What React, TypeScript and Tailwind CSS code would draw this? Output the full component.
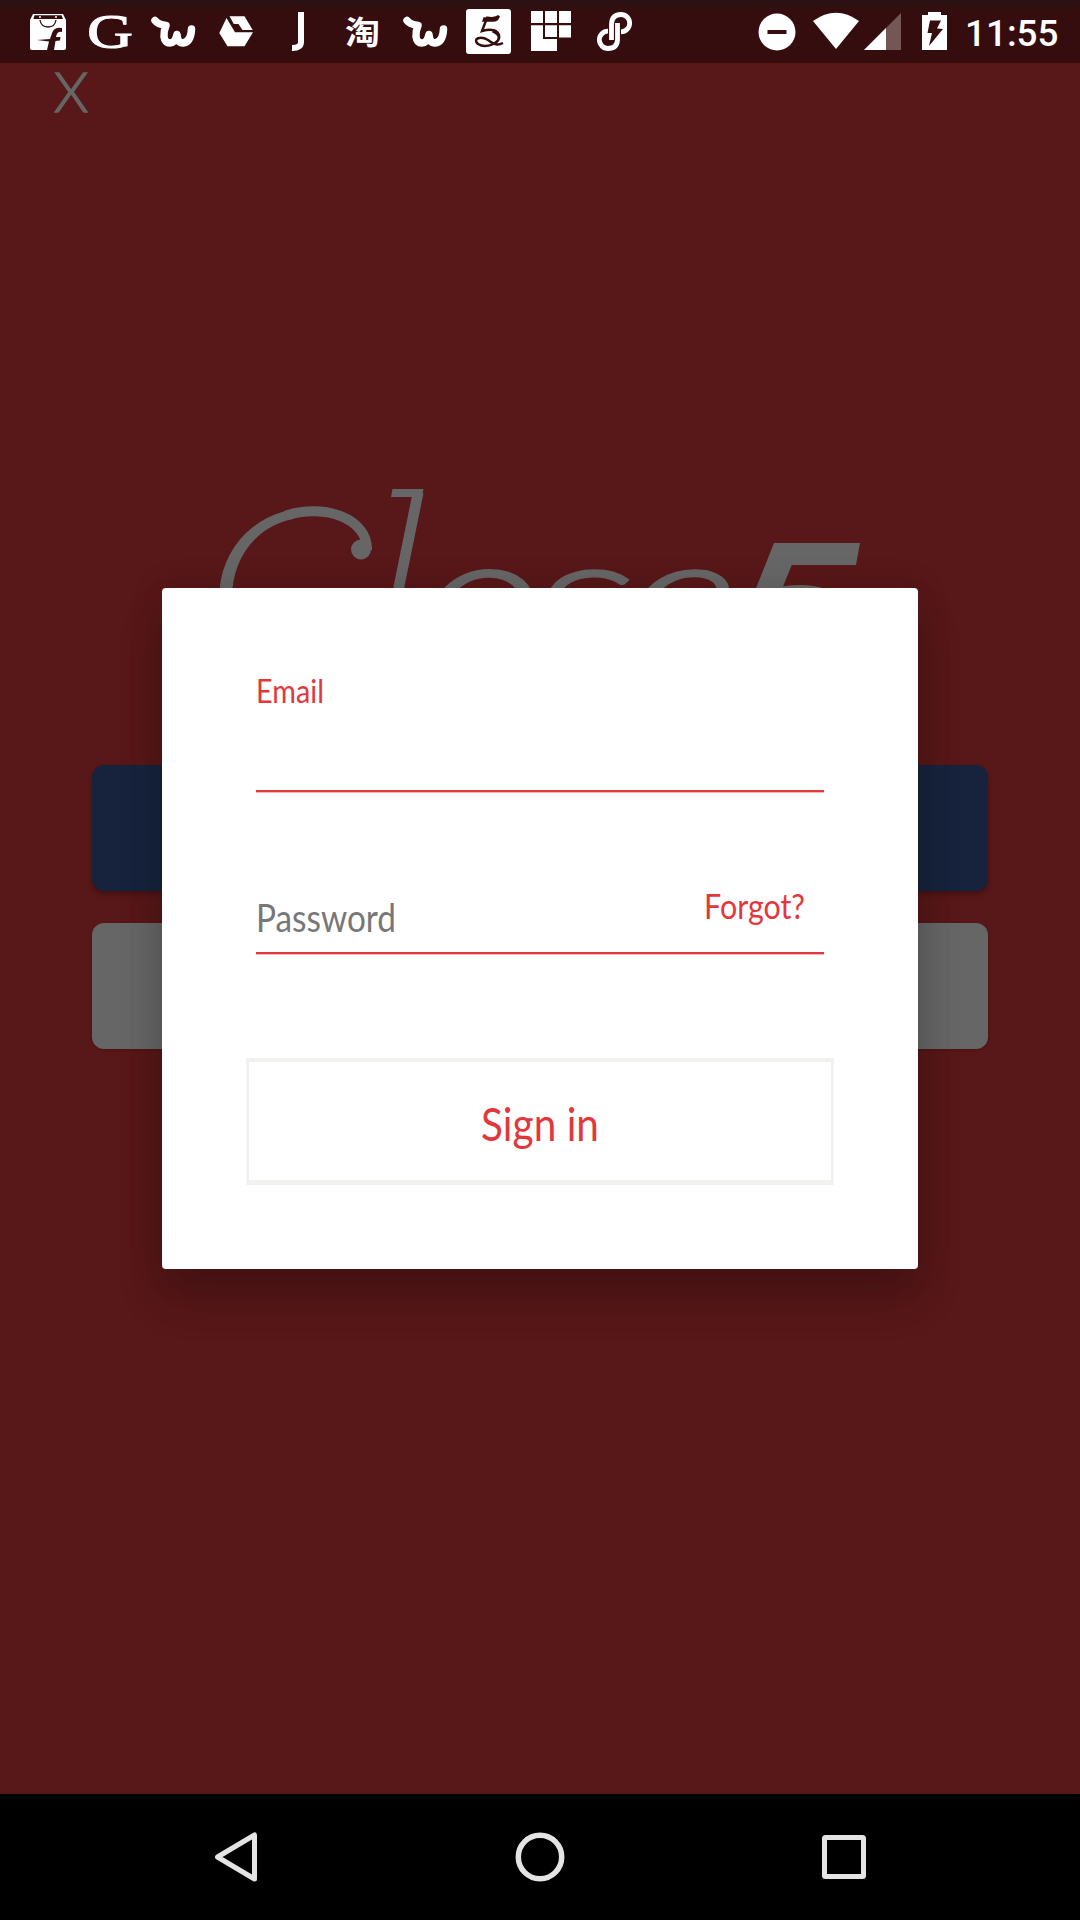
import React from "react";

type GlyphProps = { x: number; w: number; className?: string; children: React.ReactNode };

function StatusIcon({ x, w, className = "", children }: GlyphProps) {
  return (
    <svg className={"shrink-0 overflow-visible " + className} width={w} height={63} viewBox={`${x} 0 ${w} 63`} fill="white">
      {children}
    </svg>
  );
}

function WishMark({ className }: { className: string }) {
  return (
    <StatusIcon x={0} w={45} className={className}>
      <path d="M4 20.500Q7 24.500 15 25.500Q12.600 31 13 36.500Q13.800 43 19 43Q24 43 26 34.500Q26.500 43 32 43Q40 42 40.500 29" fill="none" stroke="white" strokeWidth="7.500" strokeLinecap="round" strokeLinejoin="round" />
    </StatusIcon>
  );
}

function StatusBar() {
  return (
    <header className="flex h-[63px] shrink-0 items-center bg-linear-to-b from-[#291114] from-0% to-[#360d0e] to-20%">
      <StatusIcon x={30} w={36} className="ml-[30px]">
        <path d="M33 14h30l3 6v28q0 2-2 2H32q-2 0-2-2V20z" />
        <path d="M34.500 15.200h27l1.500 3.800H33.500z" fill="#360d0e" />
        <path d="M40 20q1 7 8 7t8-7" fill="none" stroke="#360d0e" strokeWidth="1.300" />
        <circle cx="40" cy="17" r="1" /><circle cx="56" cy="17" r="1" />
        <path d="M62 28q-9-2-11 8l-1 3-13 1 12 1.500-2 8.500h7l1.500-9 4.500-.500.500-3.500H56q1-6 6-5z" fill="#360d0e" />
      </StatusIcon>
      <StatusIcon x={88} w={45} className="ml-[22px]">
        <text x="87" y="47.500" fontFamily="Liberation Serif" fontSize="49" textLength="46" lengthAdjust="spacingAndGlyphs" stroke="white" strokeWidth="1">G</text>
      </StatusIcon>
      <WishMark className="ml-[18px]" />
      <StatusIcon x={219} w={34} className="ml-[23px]">
        <path d="M226.500 18 235 32.300H253L244.500 46.300H227.500L219.300 33z" />
        <path d="M229.500 16.200H244.500L252.700 30H242.500L238.500 24H233.800z" />
      </StatusIcon>
      <StatusIcon x={292} w={13} className="ml-[39px]">
        <path d="M301 12V42Q301 48.200 292 48" fill="none" stroke="white" strokeWidth="6" />
      </StatusIcon>
      <StatusIcon x={346} w={34} className="ml-[41px]">
        <text x="345" y="44" fontFamily="Noto Sans CJK SC, sans-serif" fontWeight="700" fontSize="32" textLength="35" lengthAdjust="spacingAndGlyphs">淘</text>
      </StatusIcon>
      <WishMark className="ml-[23px]" />
      <StatusIcon x={466} w={45} className="ml-[18px]">
        <rect x="466" y="9" width="45" height="45" rx="3" />
        <path d="M499 16q-3 3-12 1.800L482 31q14-4 17 4c2 8-13 14-21 9-6-6 3-8 10-4 8 6 11 5 15 3" fill="none" stroke="#360d0e" strokeWidth="2.500" />
        <path d="M484 18q12 2 15-2-1 5-6 5h-10zM494 30q9 5 2 13 6-7-3-11z" fill="#360d0e" stroke="#360d0e" strokeWidth="1.500" />
      </StatusIcon>
      <StatusIcon x={530} w={41} className="ml-[19px]">
        <path d="M531 11h12v12h-12zM545 11h12v12h-12zM559 11h12v12h-12zM559 25.300h12V37.500h-12zM545 25.300h12V37h-12zM531 25.300h12V39h14V51h-26z" />
      </StatusIcon>
      <StatusIcon x={597} w={35} className="ml-[26px]">
        <g fill="none" stroke="white" strokeWidth="4.800">
          <path d="M611.500 40V24Q612 14.500 621 14.500A8.500 8.500 0 0 1 621 31.800" />
          <path d="M617.500 23V40Q617 48.500 608 48.500A8.500 8.500 0 0 1 608 31.200" />
        </g>
      </StatusIcon>
      <StatusIcon x={758} w={38} className="ml-auto">
        <circle cx="777" cy="32" r="18.500" />
        <rect x="767.500" y="30" width="19" height="4" fill="#360d0e" />
      </StatusIcon>
      <StatusIcon x={813} w={46} className="ml-[17px]"><path d="M836 49 813 21Q836 4.500 859 21z" /></StatusIcon>
      <StatusIcon x={864} w={37} className="ml-[5px]">
        <path d="M864 50 901 13V50z" fill="#745657" /><path d="M864 50 886 28V50z" />
      </StatusIcon>
      <StatusIcon x={922} w={25} className="ml-[21px]">
        <path d="M928 12h13v3h6v35h-25V15h6z" />
        <path d="M930 20.500h11l-4 8 6 0.500-14 17 3-13h-4.500z" fill="#360d0e" />
      </StatusIcon>
      <StatusIcon x={966} w={94} className="ml-[19px] mr-[20px]">
        <text x="965" y="46" fontFamily="Roboto" fontWeight="500" fontSize="37.500" textLength="93.500" lengthAdjust="spacingAndGlyphs">11:55</text>
      </StatusIcon>
    </header>
  );
}

function Wordmark() {
  return (
    <svg className="mx-auto block overflow-visible" width={680} height={120} viewBox="200 480 680 120" fill="#666">
      <clipPath id="bowl"><rect x="200" y="480" width="94" height="200" /></clipPath>
      <g fontFamily="Lato" fontWeight="300" fontStyle="italic" stroke="#666">
        <text x="204" y="666" fontSize="222" textLength="160" lengthAdjust="spacingAndGlyphs" strokeWidth="0" clipPath="url(#bowl)">C</text>
        <text x="0" y="0" fontSize="236" strokeWidth="0" transform="translate(367 665) skewX(-4.700)">l</text>
        <text x="419" y="665" fontSize="188" textLength="128" lengthAdjust="spacingAndGlyphs" strokeWidth="1.500">o</text>
        <text x="532" y="665" fontSize="188" textLength="105" lengthAdjust="spacingAndGlyphs" strokeWidth="1.500">s</text>
        <text x="622" y="665" fontSize="188" textLength="118" lengthAdjust="spacingAndGlyphs" strokeWidth="1.500">e</text>
        <text x="727" y="665" fontSize="168" fontWeight="900" strokeWidth="0" textLength="136" lengthAdjust="spacingAndGlyphs">5</text>
      </g>
      <circle cx="361" cy="549.500" r="10" />
      <path d="M286 515.500C325 503 368 519 367 550" fill="none" stroke="#666" strokeWidth="10" />
      <path d="M392.500 489h31l-1.500 8h-31z" />
      <path d="M778 543h82l-4 22h-80z" />
    </svg>
  );
}

function Label({ text, width, size, className }: { text: string; width: number; size: number; className: string }) {
  return (
    <svg className={"block shrink-0 overflow-visible fill-current " + className} width={width} height={size}>
      <text x="0" y={size * 0.8} fontFamily="Lato" fontSize={size} textLength={width} lengthAdjust="spacingAndGlyphs">{text}</text>
    </svg>
  );
}

function SignInDialog() {
  return (
    <section className="absolute left-[162px] top-[588px] flex h-[681px] w-[756px] flex-col rounded-[4px] bg-white shadow-[0_30px_44px_rgba(0,0,0,0.2),0_0_36px_rgba(0,0,0,0.1)]">
      <div className="mx-[94px] flex h-[204px] flex-col border-b-2 border-[#e2383d] pt-[89px] shadow-[0_1px_0_#f4b5b7]">
        <Label text="Email" width={68} size={33} className="text-[#e2383d]" />
      </div>
      <div className="mx-[94px] flex h-[162px] items-end justify-between border-b-2 border-[#e2383d] pr-[19px] shadow-[0_1px_0_#f4b5b7]">
        <Label text="Password" width={140} size={39} className="mb-[12px] text-[#777]" />
        <Label text="Forgot?" width={101} size={35} className="mb-[26px] text-[#e2383d]" />
      </div>
      <button className="ml-[84px] mt-[104px] flex h-[127px] w-[588px] items-center justify-center border-x-[3px] border-t-4 border-b-[5px] border-[#f1f1f0]">
        <Label text="Sign in" width={118} size={47} className="mt-[11px] text-[#e2383d]" />
      </button>
    </section>
  );
}

function NavigationBar() {
  return (
    <nav className="flex h-[126px] shrink-0 items-center bg-black text-[#e4e4e4]">
      <svg className="ml-[214px]" width="44" height="50" fill="none" stroke="currentColor" strokeWidth="5" strokeLinejoin="round"><path d="M40.500 3V47L3.500 25z" /></svg>
      <svg className="ml-[257px]" width="50" height="50" fill="none" stroke="currentColor" strokeWidth="5.500"><circle cx="25" cy="25" r="21.700" /></svg>
      <svg className="ml-[257px]" width="44" height="44" fill="none" stroke="currentColor" strokeWidth="5"><rect x="2.500" y="2.500" width="39" height="39" rx="1" /></svg>
    </nav>
  );
}

export default function App() {
  return (
    <div className="relative flex h-[1920px] w-[1080px] flex-col overflow-hidden bg-[#581718] font-[Lato]">
      <StatusBar />
      <main className="flex grow flex-col">
        <div className="h-[417px] pl-[54px] text-[55px] font-light leading-[56px] text-[#666] [-webkit-text-stroke:1.5px_#666]">X</div>
        <Wordmark />
        <div className="mx-[92px] mt-[165px] flex flex-col gap-8">
          <div className="h-[126px] rounded-xl bg-[#17233d] shadow-[0_3px_5px_rgba(0,0,0,0.25)]" />
          <div className="h-[126px] rounded-xl bg-[#666] shadow-[0_1px_3px_rgba(0,0,0,0.15)]" />
        </div>
      </main>
      <NavigationBar />
      <SignInDialog />
    </div>
  );
}
